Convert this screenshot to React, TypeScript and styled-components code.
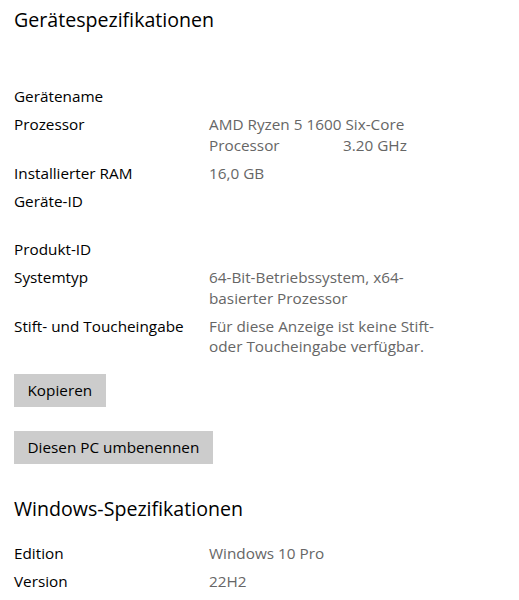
import React from "react";
import styled, { createGlobalStyle } from "styled-components";

const Global = createGlobalStyle`
  html, body { margin: 0; padding: 0; background: #ffffff; }
  body { font-family: "Open Sans", "Noto Sans", sans-serif; color: #000; }
`;

const Page = styled.div`
  width: 519px;
  height: 600px;
  overflow: hidden;
  padding: 6px 0 0 14px;
  box-sizing: border-box;
  display: flex;
  flex-direction: column;
`;

const Heading = styled.h2<{ $after: number }>`
  margin: 0 0 ${(p) => p.$after}px 0;
  font-size: 19.6px;
  font-weight: 400;
  line-height: 28px;
  color: #000;
`;

const SpecList = styled.div`
  display: flex;
  flex-direction: column;
  gap: 7.5px;
`;

const Row = styled.div`
  display: grid;
  grid-template-columns: 195px 1fr;
  font-size: 15.3px;
  line-height: 20.5px;
`;

const Label = styled.div<{ $lines?: number }>`
  color: #000;
  min-height: ${(p) => (p.$lines ?? 1) * 20.5}px;
`;

const Value = styled.div`
  color: #666666;
`;

const Gap = styled.span`
  display: inline-block;
  width: 134px;
`;

const Button = styled.button<{ $top: number }>`
  align-self: flex-start;
  margin-top: ${(p) => p.$top}px;
  height: 33px;
  padding: 0 13.5px;
  border: none;
  background: #cccccc;
  color: #000;
  font-family: inherit;
  font-size: 15.3px;
`;

const Section = styled.div<{ $top: number }>`
  margin-top: ${(p) => p.$top}px;
`;

export default function App() {
  return (
    <>
      <Global />
      <Page>
        <Heading $after={52}>Gerätespezifikationen</Heading>
        <SpecList>
          <Row>
            <Label>Gerätename</Label>
            <Value></Value>
          </Row>
          <Row>
            <Label>Prozessor</Label>
            <Value>
              AMD Ryzen 5 1600 Six-Core
              <br />
              <Gap>Processor</Gap>3.20 GHz
            </Value>
          </Row>
          <Row>
            <Label>Installierter RAM</Label>
            <Value>16,0 GB</Value>
          </Row>
          <Row>
            <Label $lines={2}>Geräte-ID</Label>
            <Value></Value>
          </Row>
          <Row>
            <Label>Produkt-ID</Label>
            <Value></Value>
          </Row>
          <Row>
            <Label>Systemtyp</Label>
            <Value>
              64-Bit-Betriebssystem, x64-
              <br />
              basierter Prozessor
            </Value>
          </Row>
          <Row>
            <Label>Stift- und Toucheingabe</Label>
            <Value>
              Für diese Anzeige ist keine Stift-
              <br />
              oder Toucheingabe verfügbar.
            </Value>
          </Row>
        </SpecList>
        <Button $top={17}>Kopieren</Button>
        <Button $top={24}>Diesen PC umbenennen</Button>
        <Section $top={31}>
          <Heading $after={20}>Windows-Spezifikationen</Heading>
          <SpecList>
            <Row>
              <Label>Edition</Label>
              <Value>Windows 10 Pro</Value>
            </Row>
            <Row>
              <Label>Version</Label>
              <Value>22H2</Value>
            </Row>
          </SpecList>
        </Section>
      </Page>
    </>
  );
}
